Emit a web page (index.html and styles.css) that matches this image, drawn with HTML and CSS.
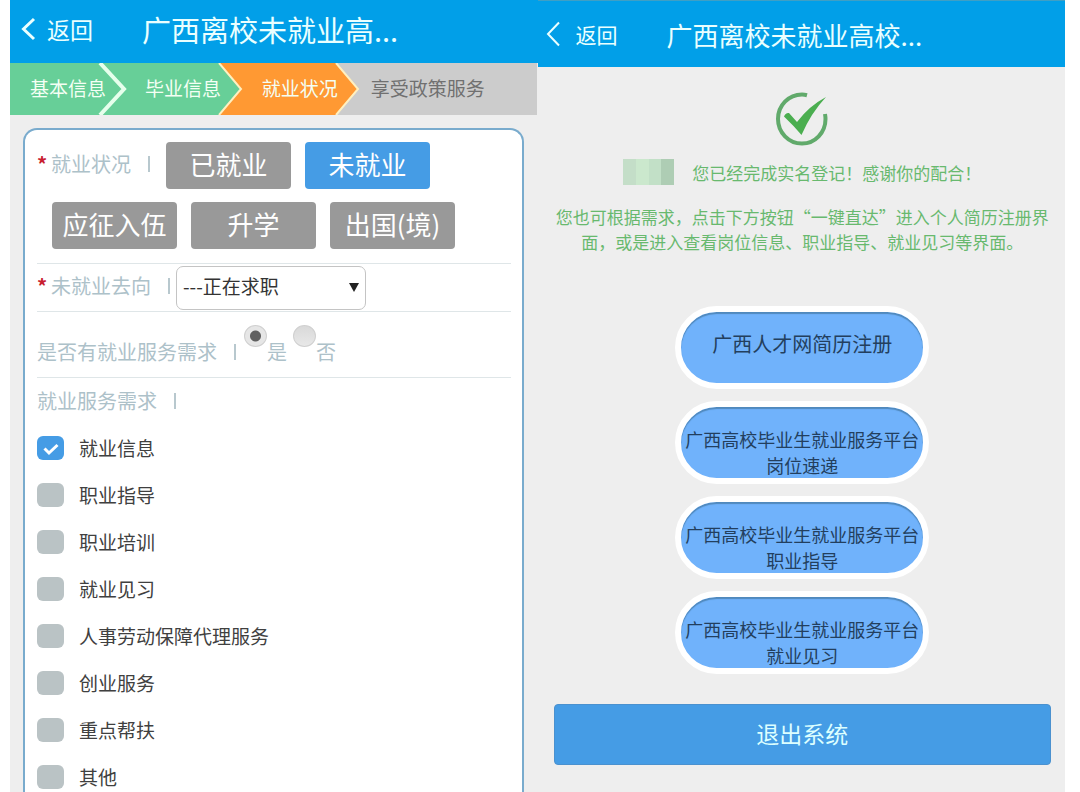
FILE: index.html
```html
<!DOCTYPE html>
<html lang="zh-CN">
<head>
<meta charset="utf-8">
<title>广西离校未就业高校毕业生</title>
<meta name="viewport" content="width=device-width, initial-scale=1">
<link rel="stylesheet" href="styles.css">
</head>
<body>
<div class="screens">
  <section class="screen form-screen">
    <header class="topbar">
      <a class="back" href="#">
        <svg class="back-icon" viewBox="0 0 15 24" aria-hidden="true"><path d="M13 2L2.500 12L13 22"/></svg>
        返回
      </a>
      <h1 class="title">广西离校未就业高...</h1>
    </header>
    <ol class="steps">
      <li class="step done"><span class="step-name">基本信息</span>
        <svg class="arrow bold" viewBox="0 0 26 52" preserveAspectRatio="none" aria-hidden="true"><path d="M-2 0L22 26L-2 52"/></svg></li>
      <li class="step done"><span class="step-name">毕业信息</span>
        <svg class="arrow" viewBox="0 0 26 52" preserveAspectRatio="none" aria-hidden="true"><path d="M0 0L22 26L0 52"/></svg></li>
      <li class="step current"><span class="step-name">就业状况</span>
        <svg class="arrow" viewBox="0 0 26 52" preserveAspectRatio="none" aria-hidden="true"><path d="M0 0L22 26L0 52"/></svg></li>
      <li class="step last"><span class="step-name">享受政策服务</span></li>
    </ol>
    <form class="card">
      <div class="status">
        <span class="label"><b class="star">*</b>就业状况<i class="bar"></i></span>
        <button class="choice" type="button">已就业</button>
        <button class="choice selected" type="button">未就业</button>
      </div>
      <div class="status more">
        <button class="choice" type="button">应征入伍</button>
        <button class="choice" type="button">升学</button>
        <button class="choice" type="button">出国(境)</button>
      </div>
      <div class="row target">
        <label class="label" for="target"><b class="star">*</b>未就业去向<i class="bar"></i></label>
        <div class="select-wrap">
          <select id="target" class="select"><option>---正在求职</option></select>
          <svg class="caret" viewBox="0 0 10 9" aria-hidden="true"><path d="M0 0H10L5 9Z"/></svg>
        </div>
      </div>
      <div class="row need" role="radiogroup" aria-labelledby="need-label">
        <span class="label" id="need-label">是否有就业服务需求<i class="bar"></i></span>
        <input class="radio" type="radio" name="need" id="need-yes" checked>
        <label class="answer" for="need-yes">是</label>
        <input class="radio" type="radio" name="need" id="need-no">
        <label class="answer" for="need-no">否</label>
      </div>
      <div class="row heading"><span class="label">就业服务需求<i class="bar"></i></span></div>
      <div class="options">
        <label class="option"><input class="check" type="checkbox" checked><svg class="tick" viewBox="0 0 27 24" aria-hidden="true"><path d="M7.500 12.500L12 17L20.500 9"/></svg>就业信息</label>
        <label class="option"><input class="check" type="checkbox">职业指导</label>
        <label class="option"><input class="check" type="checkbox">职业培训</label>
        <label class="option"><input class="check" type="checkbox">就业见习</label>
        <label class="option"><input class="check" type="checkbox">人事劳动保障代理服务</label>
        <label class="option"><input class="check" type="checkbox">创业服务</label>
        <label class="option"><input class="check" type="checkbox">重点帮扶</label>
        <label class="option"><input class="check" type="checkbox">其他</label>
      </div>
    </form>
  </section>

  <section class="screen done-screen">
    <header class="topbar">
      <a class="back" href="#">
        <svg class="back-icon" viewBox="0 0 15 26" aria-hidden="true"><path d="M13 1.500L2 13L13 24.500"/></svg>
        返回
      </a>
      <h1 class="title">广西离校未就业高校...</h1>
    </header>
    <main class="result">
      <svg class="success" viewBox="0 0 54 54" aria-hidden="true">
        <path class="ring" d="M32 3.200C30.500 2.800 28.800 2.500 27 2.500C13.600 2.500 3 13.500 3 27C3 40.500 13.600 51.500 27 51.500C40.200 51.500 50.500 40.500 50.500 27C50.500 25.200 50.300 23.700 50 22"/>
        <path class="mark" d="M9 24.500Q10.500 20.500 14 21L22 30Q34 14 51 5Q36 21 26.500 43Q19 34 9 24.500Z"/>
      </svg>
      <p class="thanks"><span class="mosaic"></span>您已经完成实名登记！感谢你的配合！</p>
      <p class="hint">您也可根据需求，点击下方按钮“一键直达”进入个人简历注册界面，或是进入查看岗位信息、职业指导、就业见习等界面。</p>
      <nav class="links">
        <a class="pill single" href="#">广西人才网简历注册</a>
        <a class="pill" href="#">广西高校毕业生就业服务平台<br>岗位速递</a>
        <a class="pill" href="#">广西高校毕业生就业服务平台<br>职业指导</a>
        <a class="pill" href="#">广西高校毕业生就业服务平台<br>就业见习</a>
      </nav>
      <button class="exit" type="button">退出系统</button>
    </main>
  </section>
</div>
</body>
</html>
```

FILE: styles.css
```css
* { box-sizing: border-box; }

body {
  margin: 0;
  background: #fff;
  color: #444;
  font-family: "Noto Sans CJK SC", "Noto Sans", sans-serif;
  font-size: 19px;
}

button, select, input { font-family: inherit; margin: 0; }
a { color: inherit; text-decoration: none; }

.screens {
  display: grid;
  grid-template-columns: 1fr 1fr;
  min-height: 100vh;
  padding: 0 15px 0 10px;
}

.screen {
  display: flex;
  flex-direction: column;
  background: #eee;
}

/* Top bars */
.topbar {
  display: flex;
  align-items: center;
  background: #019fe8;
  color: #eaffff;
}
.back { display: flex; align-items: center; }
.back-icon {
  width: 15px;
  height: 24px;
  fill: none;
  stroke: currentColor;
  stroke-width: 3;
}
.title { margin: 0; font-weight: 400; white-space: nowrap; }

.form-screen .topbar { height: 63px; padding: 0 11px 6px; }
.form-screen .back { gap: 11px; font-size: 23px; }
.form-screen .title { margin-left: 49px; font-size: 29px; }

.done-screen .topbar { height: 67px; padding: 0 8px; border-top: 1px solid #3f9fc4; }
.done-screen .back { gap: 15px; font-size: 21px; }
.done-screen .back-icon { height: 26px; stroke-width: 2; }
.done-screen .title { margin-left: 49px; font-size: 26px; }

/* Progress steps */
.steps {
  display: grid;
  grid-template-columns:
    minmax(0, 92fr) minmax(0, 117fr) minmax(0, 117fr) minmax(0, 202fr);
  height: 52px;
  margin: 0;
  padding: 0;
  list-style: none;
}
.step {
  position: relative;
  display: flex;
  align-items: center;
  padding: 0 0 4px 43px;
  color: #f4fff4;
  white-space: nowrap;
}
.step:first-child { padding-left: 20px; }
.step.done { background: #67cf98; }
.step.current { background: #ff9933; }
.step.last { padding-left: 35px; background: #ccc; color: #707070; }
.step-name { position: relative; z-index: 2; }
.arrow {
  position: absolute;
  z-index: 1;
  top: 0;
  left: 100%;
  width: 26px;
  height: 100%;
  overflow: visible;
  stroke: #fff0c0;
  stroke-width: 2;
}
.steps { overflow: hidden; }
.done .arrow { fill: #67cf98; }
.current .arrow { fill: #ff9933; }
.arrow.bold { stroke: #e6ffec; stroke-width: 4; }

/* Form card */
.card {
  flex: 1;
  margin: 13px 14px 0 13px;
  padding: 12px 11px 0 12px;
  border: 2px solid #79abcd;
  border-bottom: 0;
  border-radius: 14px 14px 0 0;
  background: #fff;
}
.label {
  display: flex;
  align-items: center;
  padding-bottom: 4px;
  color: #adc1c9;
  font-size: 20px;
  line-height: 30px;
  white-space: nowrap;
}
.star { width: 14px; color: #c8202f; font-weight: 700; }
.bar { width: 2px; height: 16px; margin-left: 17px; background: #b8c8ce; }

.status { display: flex; align-items: center; gap: 14px; }
.status .label { margin-right: 2px; }
.status.more { padding: 13px 0 14px 15px; }
.choice {
  width: 125px;
  height: 47px;
  padding: 0 0 4px;
  border: 0;
  border-radius: 4px;
  background: #999;
  color: #fff;
  font-size: 26px;
  line-height: 36px;
}
.choice.selected { background: #459ce5; }

.row { display: flex; border-top: 1px solid #dfe6e8; }
.target { align-items: center; gap: 6px; height: 48px; }
.select-wrap { position: relative; }
.select {
  width: 190px;
  height: 44px;
  padding: 0 28px 4px 6px;
  border: 1px solid #c4c4c4;
  border-radius: 7px;
  appearance: none;
  background: #fff;
  color: #333;
  font-size: 19px;
}
.caret {
  position: absolute;
  top: 17px;
  right: 7px;
  width: 10px;
  height: 9px;
  fill: #222;
  pointer-events: none;
}
.need { align-items: flex-start; height: 66px; padding-top: 13px; }
.need .label, .answer { padding-top: 12px; }
.need .label { margin-right: 8px; }
.answer { margin-right: 6px; color: #adc1c9; font-size: 20px; line-height: 30px; }
.radio {
  width: 23px;
  height: 22px;
  border: 1px solid #d0d0d0;
  border-radius: 50%;
  appearance: none;
  background: linear-gradient(#d9d9d9, #e8e8e8);
}
.radio:checked { background: radial-gradient(circle, #606060 5px, #e6e6e6 6px); }
.heading { align-items: flex-start; padding-top: 8px; height: 48px; }

.option {
  position: relative;
  display: flex;
  align-items: center;
  gap: 15px;
  height: 47px;
  padding-bottom: 2px;
  color: #404040;
}
.check {
  width: 27px;
  height: 24px;
  border-radius: 6px;
  appearance: none;
  background: #bac3c5;
}
.check:checked { background: #459ce5; }
.tick {
  position: absolute;
  left: 0;
  width: 27px;
  height: 24px;
  fill: none;
  stroke: #fff;
  stroke-width: 3;
}

/* Result screen */
.result {
  display: flex;
  flex-direction: column;
  align-items: center;
  padding: 25px 14px 27px 16px;
}
.success { width: 54px; height: 54px; }
.ring { fill: none; stroke: #61aa6b; stroke-width: 4; }
.mark { fill: #4bae50; }
.thanks, .hint { margin: 0; color: #68b96e; font-size: 17px; line-height: 25px; }
.thanks { display: flex; align-items: center; gap: 18px; margin-top: 13px; white-space: nowrap; }
.mosaic {
  width: 51px;
  height: 26px;
  background: linear-gradient(90deg, #c4dec8 0 26%, #cbe8cd 26% 50%, #c2e0c7 50% 75%, #aecdb4 75%);
}
.hint { margin-top: 19px; text-align: center; }
.links { display: grid; gap: 12px; margin-top: 52px; }
.pill {
  width: 254px;
  height: 83px;
  padding-top: 19px;
  border: 6px solid #fff;
  border-radius: 42px;
  background: #70b2fb;
  box-shadow: inset 0 2px 1px #5089bd;
  color: #233f5e;
  font-size: 18px;
  line-height: 26px;
  text-align: center;
  white-space: nowrap;
}
.pill.single { font-size: 20px; }
.exit {
  width: 100%;
  height: 61px;
  margin-top: 30px;
  padding: 0 0 4px;
  border: 1px solid #4a91cf;
  border-radius: 4px;
  background: #459ce5;
  color: #dcffff;
  font-size: 23px;
}
```
